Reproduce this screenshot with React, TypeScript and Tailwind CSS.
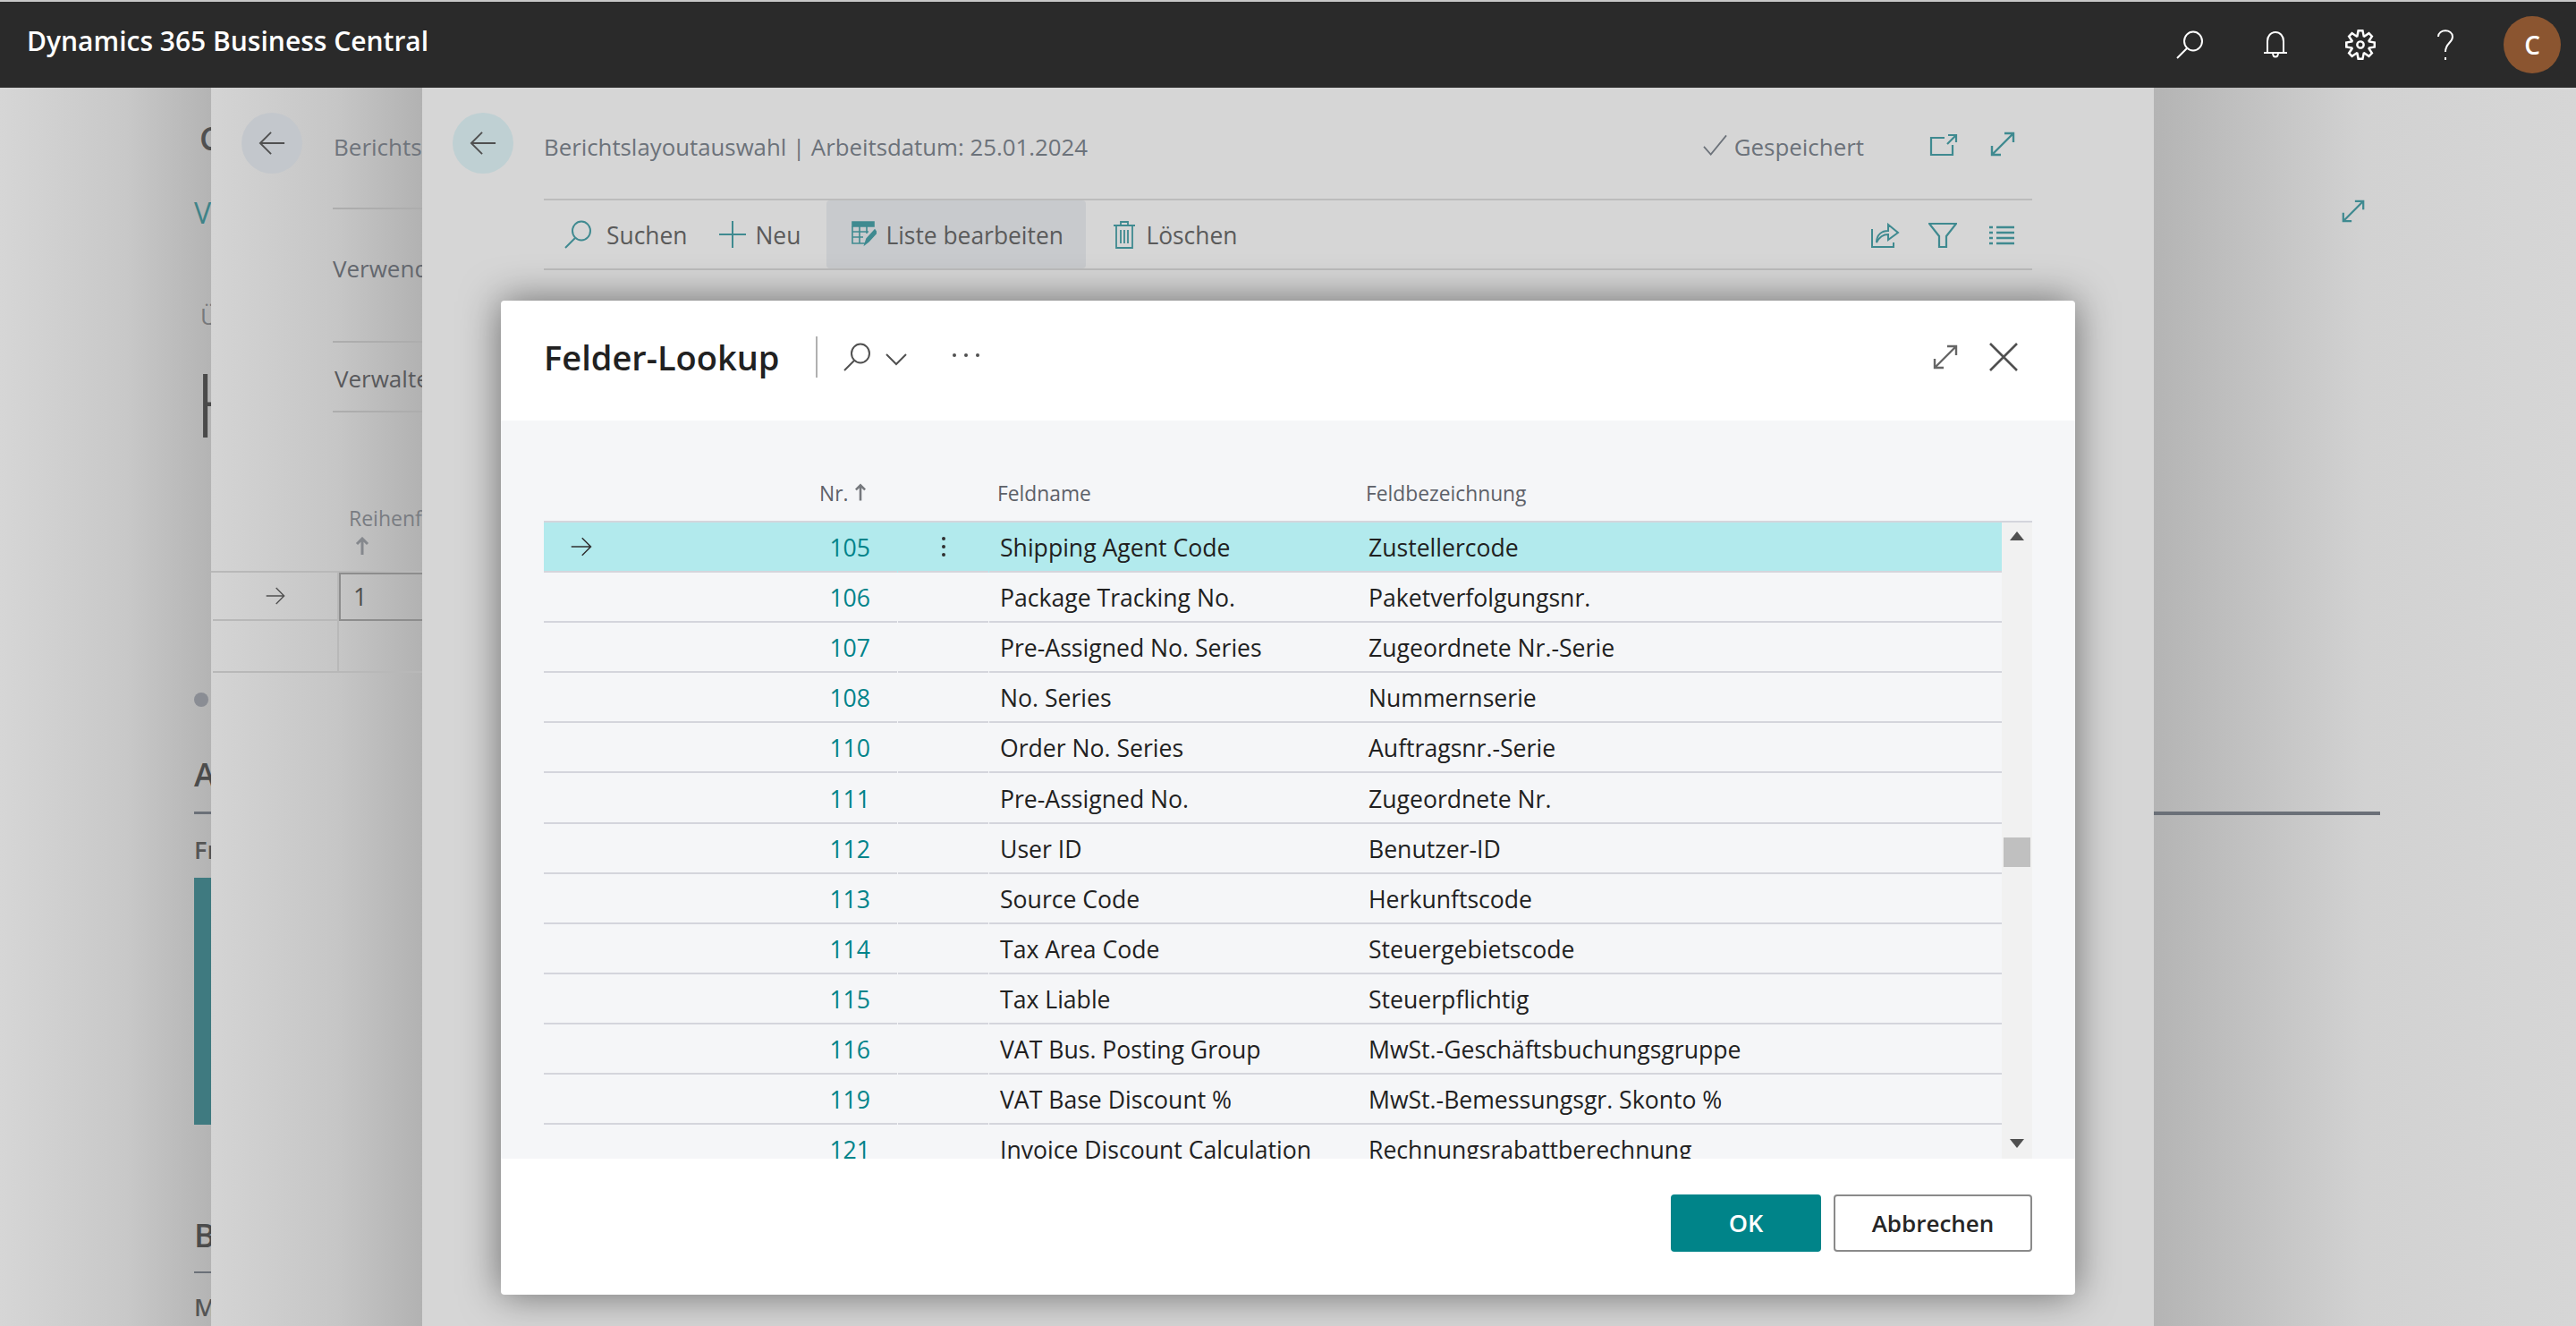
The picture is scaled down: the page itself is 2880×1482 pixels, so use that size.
import type { ReactNode } from "react";
import { VscSettingsGear } from "react-icons/vsc";

const rows = [
  ["105", "Shipping Agent Code", "Zustellercode"],
  ["106", "Package Tracking No.", "Paketverfolgungsnr."],
  ["107", "Pre-Assigned No. Series", "Zugeordnete Nr.-Serie"],
  ["108", "No. Series", "Nummernserie"],
  ["110", "Order No. Series", "Auftragsnr.-Serie"],
  ["111", "Pre-Assigned No.", "Zugeordnete Nr."],
  ["112", "User ID", "Benutzer-ID"],
  ["113", "Source Code", "Herkunftscode"],
  ["114", "Tax Area Code", "Steuergebietscode"],
  ["115", "Tax Liable", "Steuerpflichtig"],
  ["116", "VAT Bus. Posting Group", "MwSt.-Geschäftsbuchungsgruppe"],
  ["119", "VAT Base Discount %", "MwSt.-Bemessungsgr. Skonto %"],
  ["121", "Invoice Discount Calculation", "Rechnungsrabattberechnung"],
];

function SearchIcon({ className }: { className: string }) {
  return (
    <svg viewBox="0 0 32 32" fill="none" stroke="currentColor" strokeWidth="2" className={className}>
      <ellipse cx="20" cy="12" rx="10" ry="10.5" />
      <path d="M13 20 2 31" />
    </svg>
  );
}

function ExpandIcon({ className }: { className: string }) {
  return (
    <svg viewBox="0 0 30 30" fill="none" stroke="currentColor" strokeWidth="2.4" className={className}>
      <path d="M3 27 27 3M17 3h10v10M3 17v10h10" />
    </svg>
  );
}

function ArrowIcon({ className, left }: { className: string; left?: boolean }) {
  return (
    <svg viewBox="0 0 32 32" fill="none" stroke="currentColor" strokeWidth="2" className={className}>
      {left ? <path d="M31 16H2M15 3 2 16l13 13" /> : <path d="M1 16h29M17 3l13 13-13 13" />}
    </svg>
  );
}

function BackButton({ color }: { color: string }) {
  return (
    <div className={`flex h-[68px] w-[68px] shrink-0 items-center justify-center rounded-full ${color}`}>
      <ArrowIcon left className="h-[30px] w-[32px] text-[#505050]" />
    </div>
  );
}

function PageStrip() {
  return (
    <div className="h-full w-[236px] shrink-0 overflow-hidden bg-linear-to-r from-[#d6d6d6] via-[#c8c8c8] via-60% to-[#b4b4b4] pl-[217px] whitespace-nowrap">
      <div className="mt-[37px] flex h-[40px] items-center pl-[6px] text-[36px] font-semibold text-[#505050]">C</div>
      <div className="mt-[43px] flex h-[40px] items-center text-[32px] text-[#3f8388]">V</div>
      <div className="mt-[75px] flex h-[40px] items-center pl-[7px] text-[26px] text-[#77797c]">Ü</div>
      <div className="mt-[27px] flex h-[100px] items-center text-[100px] font-light text-[#4a4a4a]">H</div>
      <div className="mt-[274px] h-[16px] w-[16px] rounded-full bg-[#8a8d94]" />
      <div className="mt-[56px] flex h-[40px] items-center text-[36px] font-semibold text-[#4c4c4c]">A</div>
      <div className="mt-[21px] h-[3px] bg-[#6b7078]" />
      <div className="mt-[22px] flex h-[36px] items-center text-[27px] font-semibold text-[#555555]">Fr</div>
      <div className="mt-[13px] h-[276px] bg-[#3f7a80]" />
      <div className="mt-[104px] flex h-[40px] items-center text-[36px] font-semibold text-[#4c4c4c]">B</div>
      <div className="mt-[20px] h-[2px] bg-[#6b7078]" />
      <div className="mt-[20px] flex h-[36px] items-center text-[27px] font-semibold text-[#555555]">M</div>
    </div>
  );
}

function ListStrip() {
  return (
    <div className="h-full w-[236px] shrink-0 overflow-hidden bg-linear-to-r from-[#d4d4d4] via-[#c6c6c6] via-60% to-[#b2b2b2] whitespace-nowrap">
      <div className="mt-[28px] flex items-center gap-[35px] pl-[34px]">
        <BackButton color="bg-[#c3c7cc]" />
        <span className="pt-[8px] text-[26px] text-[#6f747c]">Berichtsauswahl</span>
      </div>
      <div className="pl-[136px]">
        <div className="mt-[38px] h-[2px] bg-[#adadad]" />
        <div className="mt-[46px] flex h-[40px] items-center text-[26px] text-[#63676e]">Verwendung</div>
        <div className="mt-[61px] h-[2px] bg-[#adadad]" />
        <div className="mt-[20px] flex h-[40px] items-center pl-[2px] text-[26px] text-[#58595c]">Verwalten</div>
        <div className="mt-[16px] h-[2px] bg-[#adadad]" />
        <div className="mt-[102px] ml-[18px] flex h-[32px] items-center text-[23px] text-[#797c82]">Reihenfolge</div>
        <svg viewBox="0 0 20 20" fill="none" stroke="#85888d" strokeWidth="3" className="mt-[5px] ml-[23px] h-[20px] w-[20px]">
          <path d="M10 20V3M4 8l6-6 6 6" />
        </svg>
      </div>
      <div className="mt-[18px] border-t-2 border-[#b8b8b8] pl-[2px]">
        <div className="flex h-[54px]">
          <div className="flex w-[141px] shrink-0 items-center justify-center border-r-2 border-b-2 border-[#b8b8b8]">
            <ArrowIcon className="h-[22px] w-[26px] text-[#505050]" />
          </div>
          <div className="flex-1 border-y-2 border-l-2 border-[#8d8d8d] pl-[14px] text-[27px] leading-[50px] text-[#4e4e4e]">1</div>
        </div>
        <div className="flex h-[58px] border-b-2 border-[#b8b8b8]">
          <div className="w-[141px] shrink-0 border-r-2 border-[#b8b8b8]" />
        </div>
      </div>
    </div>
  );
}

function ActionButton({ icon, label, className }: { icon: ReactNode; label: string; className: string }) {
  return (
    <div className={`flex h-full items-center ${className}`}>
      {icon}
      <span className="pt-[3px]">{label}</span>
    </div>
  );
}

function MainPanel() {
  return (
    <div className="h-full w-[1936px] shrink-0 overflow-hidden bg-[#d6d6d6]">
      <div className="mt-[28px] flex items-center pr-[154px] pl-[34px]">
        <BackButton color="bg-[#bfd0d3]" />
        <span className="ml-[34px] pt-[8px] text-[25.8px] text-[#6c727a]">Berichtslayoutauswahl | Arbeitsdatum: 25.01.2024</span>
        <svg viewBox="0 0 28 24" fill="none" stroke="#6c727a" strokeWidth="1.8" className="mt-[3px] mr-[8px] ml-auto h-[24px] w-[27px]">
          <path d="m1 14 8 9L27 1" />
        </svg>
        <span className="pt-[8px] text-[25.9px] text-[#6c727a]">Gespeichert</span>
        <svg viewBox="0 0 32 24" fill="none" stroke="#3f8a90" strokeWidth="2.2" className="mt-[3px] ml-[73px] h-[24px] w-[32px]">
          <path d="M17 4H2v19h24V12M21 1h9v8M30 1 20 11" />
        </svg>
        <ExpandIcon className="mt-[2px] ml-[35px] h-[30px] w-[30px] text-[#3f8a90]" />
      </div>
      <div className="mx-[136px] mt-[28px] flex h-[80px] items-center border-y-2 border-[#bcbcbc] text-[26.4px] text-[#5a5a5a]">
        <ActionButton
          label="Suchen"
          className="ml-[22px] gap-[16px]"
          icon={<SearchIcon className="h-[32px] w-[32px] text-[#3f8a90]" />}
        />
        <ActionButton
          label="Neu"
          className="ml-[35px] gap-[11px]"
          icon={
            <svg viewBox="0 0 30 30" fill="none" stroke="#3f8a90" strokeWidth="2" className="h-[30px] w-[30px]">
              <path d="M15 0v30M0 15h30" />
            </svg>
          }
        />
        <ActionButton
          label="Liste bearbeiten"
          className="ml-[29px] w-[290px] gap-[10px] rounded-sm bg-[#c8cacd] pl-[28px]"
          icon={
            <svg viewBox="0 0 28 30" fill="none" stroke="#3f8a90" strokeWidth="1.6" className="h-[30px] w-[28px]">
              <path d="M1 1h24v5H1z" fill="#3f8a90" />
              <path d="M1 6v19h14M9 6v19M17 6v8M1 12h18M1 18h12" />
              <path d="m15 26 2-6 9-10 2 3-9 10z" fill="#3f8a90" />
            </svg>
          }
        />
        <ActionButton
          label="Löschen"
          className="ml-[31px] gap-[12px]"
          icon={
            <svg viewBox="0 0 24 31" fill="none" stroke="#3f8a90" strokeWidth="1.8" className="h-[31px] w-[24px]">
              <path d="M0 5h24M8 5V1h8v4M3 5v25h18V5M8 10v15M12 10v15M16 10v15" />
            </svg>
          }
        />
        <svg viewBox="0 0 32 28" fill="none" stroke="#3f8a90" strokeWidth="2" className="mt-[2px] ml-auto h-[28px] w-[32px]">
          <path d="M1 7v20h24v-5" />
          <path d="M6 22c0-9 6-13 13-13V2l11 9-11 8v-6c-6 0-10 3-13 9Z" />
        </svg>
        <svg viewBox="0 0 32 28" fill="none" stroke="#3f8a90" strokeWidth="2.2" className="mt-[2px] ml-[32px] h-[28px] w-[32px]">
          <path d="M1 1h30L20 15v12h-8V15z" />
        </svg>
        <svg viewBox="0 0 28 22" stroke="#3f8a90" strokeWidth="2.4" className="mt-[2px] mr-[20px] ml-[36px] h-[22px] w-[28px]">
          <path d="M8 2h20M8 8h20M8 14h20M8 20h20M0 2h4M0 8h4M0 14h4M0 20h4" />
        </svg>
      </div>
    </div>
  );
}

function RightStrip() {
  return (
    <div className="h-full flex-1 overflow-hidden bg-linear-to-r from-[#b4b4b4] via-[#d2d2d2] via-50% to-[#d6d6d6] pt-[124px]">
      <ExpandIcon className="ml-[209px] h-[28px] w-[28px] text-[#3f8a90]" />
      <div className="mt-[657px] h-[4px] w-[253px] bg-[#6b7078]" />
    </div>
  );
}

function FieldTable() {
  return (
    <div className="h-[714px] flex-1 overflow-hidden text-[26.6px]">
      {rows.map((row, i) => (
        <div key={row[0]} className={`flex h-[56.1px] ${i === 0 ? "bg-[#b2eaed]" : ""}`}>
          <div className="flex w-[395px] shrink-0 items-center border-b-2 border-[#d4d5dc] pr-[30px]">
            {i === 0 && <ArrowIcon className="ml-[29px] h-[24px] w-[26px] text-[#303030]" />}
            <span className="ml-auto pt-[4px] text-[#00838a]">{row[0]}</span>
          </div>
          <div className="ml-px flex w-[101px] shrink-0 flex-col items-center justify-center gap-[5px] border-b-2 border-[#d4d5dc]">
            {i === 0 && (
              <>
                <span className="h-[4px] w-[4px] rounded-full bg-[#303030]" />
                <span className="h-[4px] w-[4px] rounded-full bg-[#303030]" />
                <span className="h-[4px] w-[4px] rounded-full bg-[#303030]" />
              </>
            )}
          </div>
          <div className="ml-px flex w-[411px] shrink-0 items-center border-b-2 border-[#d4d5dc] pt-[4px] pl-[12px] text-[#212121]">{row[1]}</div>
          <div className="flex flex-1 items-center border-b-2 border-[#d4d5dc] pt-[4px] pl-[13px] text-[#212121]">{row[2]}</div>
        </div>
      ))}
    </div>
  );
}

function Dialog() {
  return (
    <div className="absolute top-[238px] left-[560px] flex h-[1111px] w-[1760px] flex-col rounded-[4px] bg-white shadow-[0_0_44px_rgba(0,0,0,0.5)]">
      <div className="flex h-[134px] shrink-0 items-center px-[48px] pb-[8px]">
        <span className="text-[38px] font-semibold text-[#212121]">Felder-Lookup</span>
        <div className="ml-[40px] h-[46px] w-[2px] bg-[#b0b0b0]" />
        <SearchIcon className="ml-[28px] h-[32px] w-[32px] text-[#505050]" />
        <svg viewBox="0 0 24 14" fill="none" stroke="#505050" strokeWidth="2" className="mt-[6px] ml-[16px] h-[14px] w-[24px]">
          <path d="m1 1 11 11L23 1" />
        </svg>
        <div className="mb-[4px] ml-[51px] flex gap-[9px]">
          <span className="h-[4px] w-[4px] rounded-full bg-[#505050]" />
          <span className="h-[4px] w-[4px] rounded-full bg-[#505050]" />
          <span className="h-[4px] w-[4px] rounded-full bg-[#505050]" />
        </div>
        <ExpandIcon className="ml-auto h-[30px] w-[30px] text-[#666666]" />
        <svg viewBox="0 0 32 32" fill="none" stroke="#505050" strokeWidth="2.6" className="mr-[16px] ml-[34px] h-[32px] w-[32px]">
          <path d="m1 1 30 30M31 1 1 31" />
        </svg>
      </div>
      <div className="flex h-[825px] shrink-0 flex-col bg-[#f5f6f8] px-[48px]">
        <div className="flex h-[112px] shrink-0 items-end pb-[13px] text-[22.8px] text-[#5d6169]">
          <span className="ml-[308px] flex w-[200px] items-center gap-[8px]">
            Nr.
            <svg viewBox="0 0 14 22" fill="none" stroke="#75787d" strokeWidth="3" className="mb-[4px] h-[20px] w-[12px]">
              <path d="M7 22V2M1 8l6-6 6 6" />
            </svg>
          </span>
          <span className="-ml-px w-[412px]">Feldname</span>
          <span>Feldbezeichnung</span>
        </div>
        <div className="flex flex-1 flex-col overflow-hidden">
          <div className="flex border-t-2 border-b-2 border-t-[#d4d5dc] border-b-[#cccccc]">
            <FieldTable />
            <div className="flex w-[34px] shrink-0 flex-col items-center bg-[#f1f1f1]">
              <div className="mt-[10px] h-0 w-0 border-x-[8px] border-b-[10px] border-x-transparent border-b-[#505050]" />
              <div className="mt-[332px] h-[33px] w-[30px] bg-[#c0c0c0]" />
              <div className="mt-[304px] h-0 w-0 border-x-[8px] border-t-[10px] border-x-transparent border-t-[#505050]" />
            </div>
          </div>
        </div>
      </div>
      <div className="flex flex-1 items-start justify-end gap-[14px] px-[48px] pt-[40px]">
        <button className="h-[64px] w-[168px] rounded-[4px] bg-[#008489] text-[27px] font-semibold text-white">OK</button>
        <button className="h-[64px] w-[222px] rounded-[4px] border-2 border-[#8a8a8a] bg-white text-[26px] font-semibold text-[#262626]">Abbrechen</button>
      </div>
    </div>
  );
}

export default function App() {
  return (
    <div className="flex h-screen w-full flex-col overflow-hidden font-['Open_Sans',sans-serif]">
      <header className="flex h-[98px] shrink-0 items-center border-t-2 border-[#c8c8c8] bg-[#2a2a2a] pr-[17px] pl-[30px] text-white">
        <span className="pb-[10px] text-[30px] font-semibold">Dynamics 365 Business Central</span>
        <SearchIcon className="ml-auto h-[32px] w-[32px]" />
        <svg viewBox="0 0 28 32" fill="none" stroke="white" strokeWidth="2" className="ml-[66px] h-[32px] w-[28px]">
          <path d="M5 25V12C5 6 9 2 14 2s9 4 9 10v13M1 25h26M11 25c0 6 6 6 6 0" />
        </svg>
        <VscSettingsGear className="ml-[64px] h-[34px] w-[34px]" />
        <svg viewBox="0 0 20 34" fill="none" stroke="white" strokeWidth="2" className="ml-[68px] h-[34px] w-[20px]">
          <path d="M2 8c0-9 16-9 16 0 0 7-8 7-8 17M10 31v3" />
        </svg>
        <div className="ml-[55px] flex h-[64px] w-[64px] items-center justify-center rounded-full bg-[#8b5530] text-[28px] font-semibold">C</div>
      </header>
      <main className="relative flex flex-1 overflow-hidden">
        <PageStrip />
        <ListStrip />
        <MainPanel />
        <RightStrip />
        <Dialog />
      </main>
    </div>
  );
}
